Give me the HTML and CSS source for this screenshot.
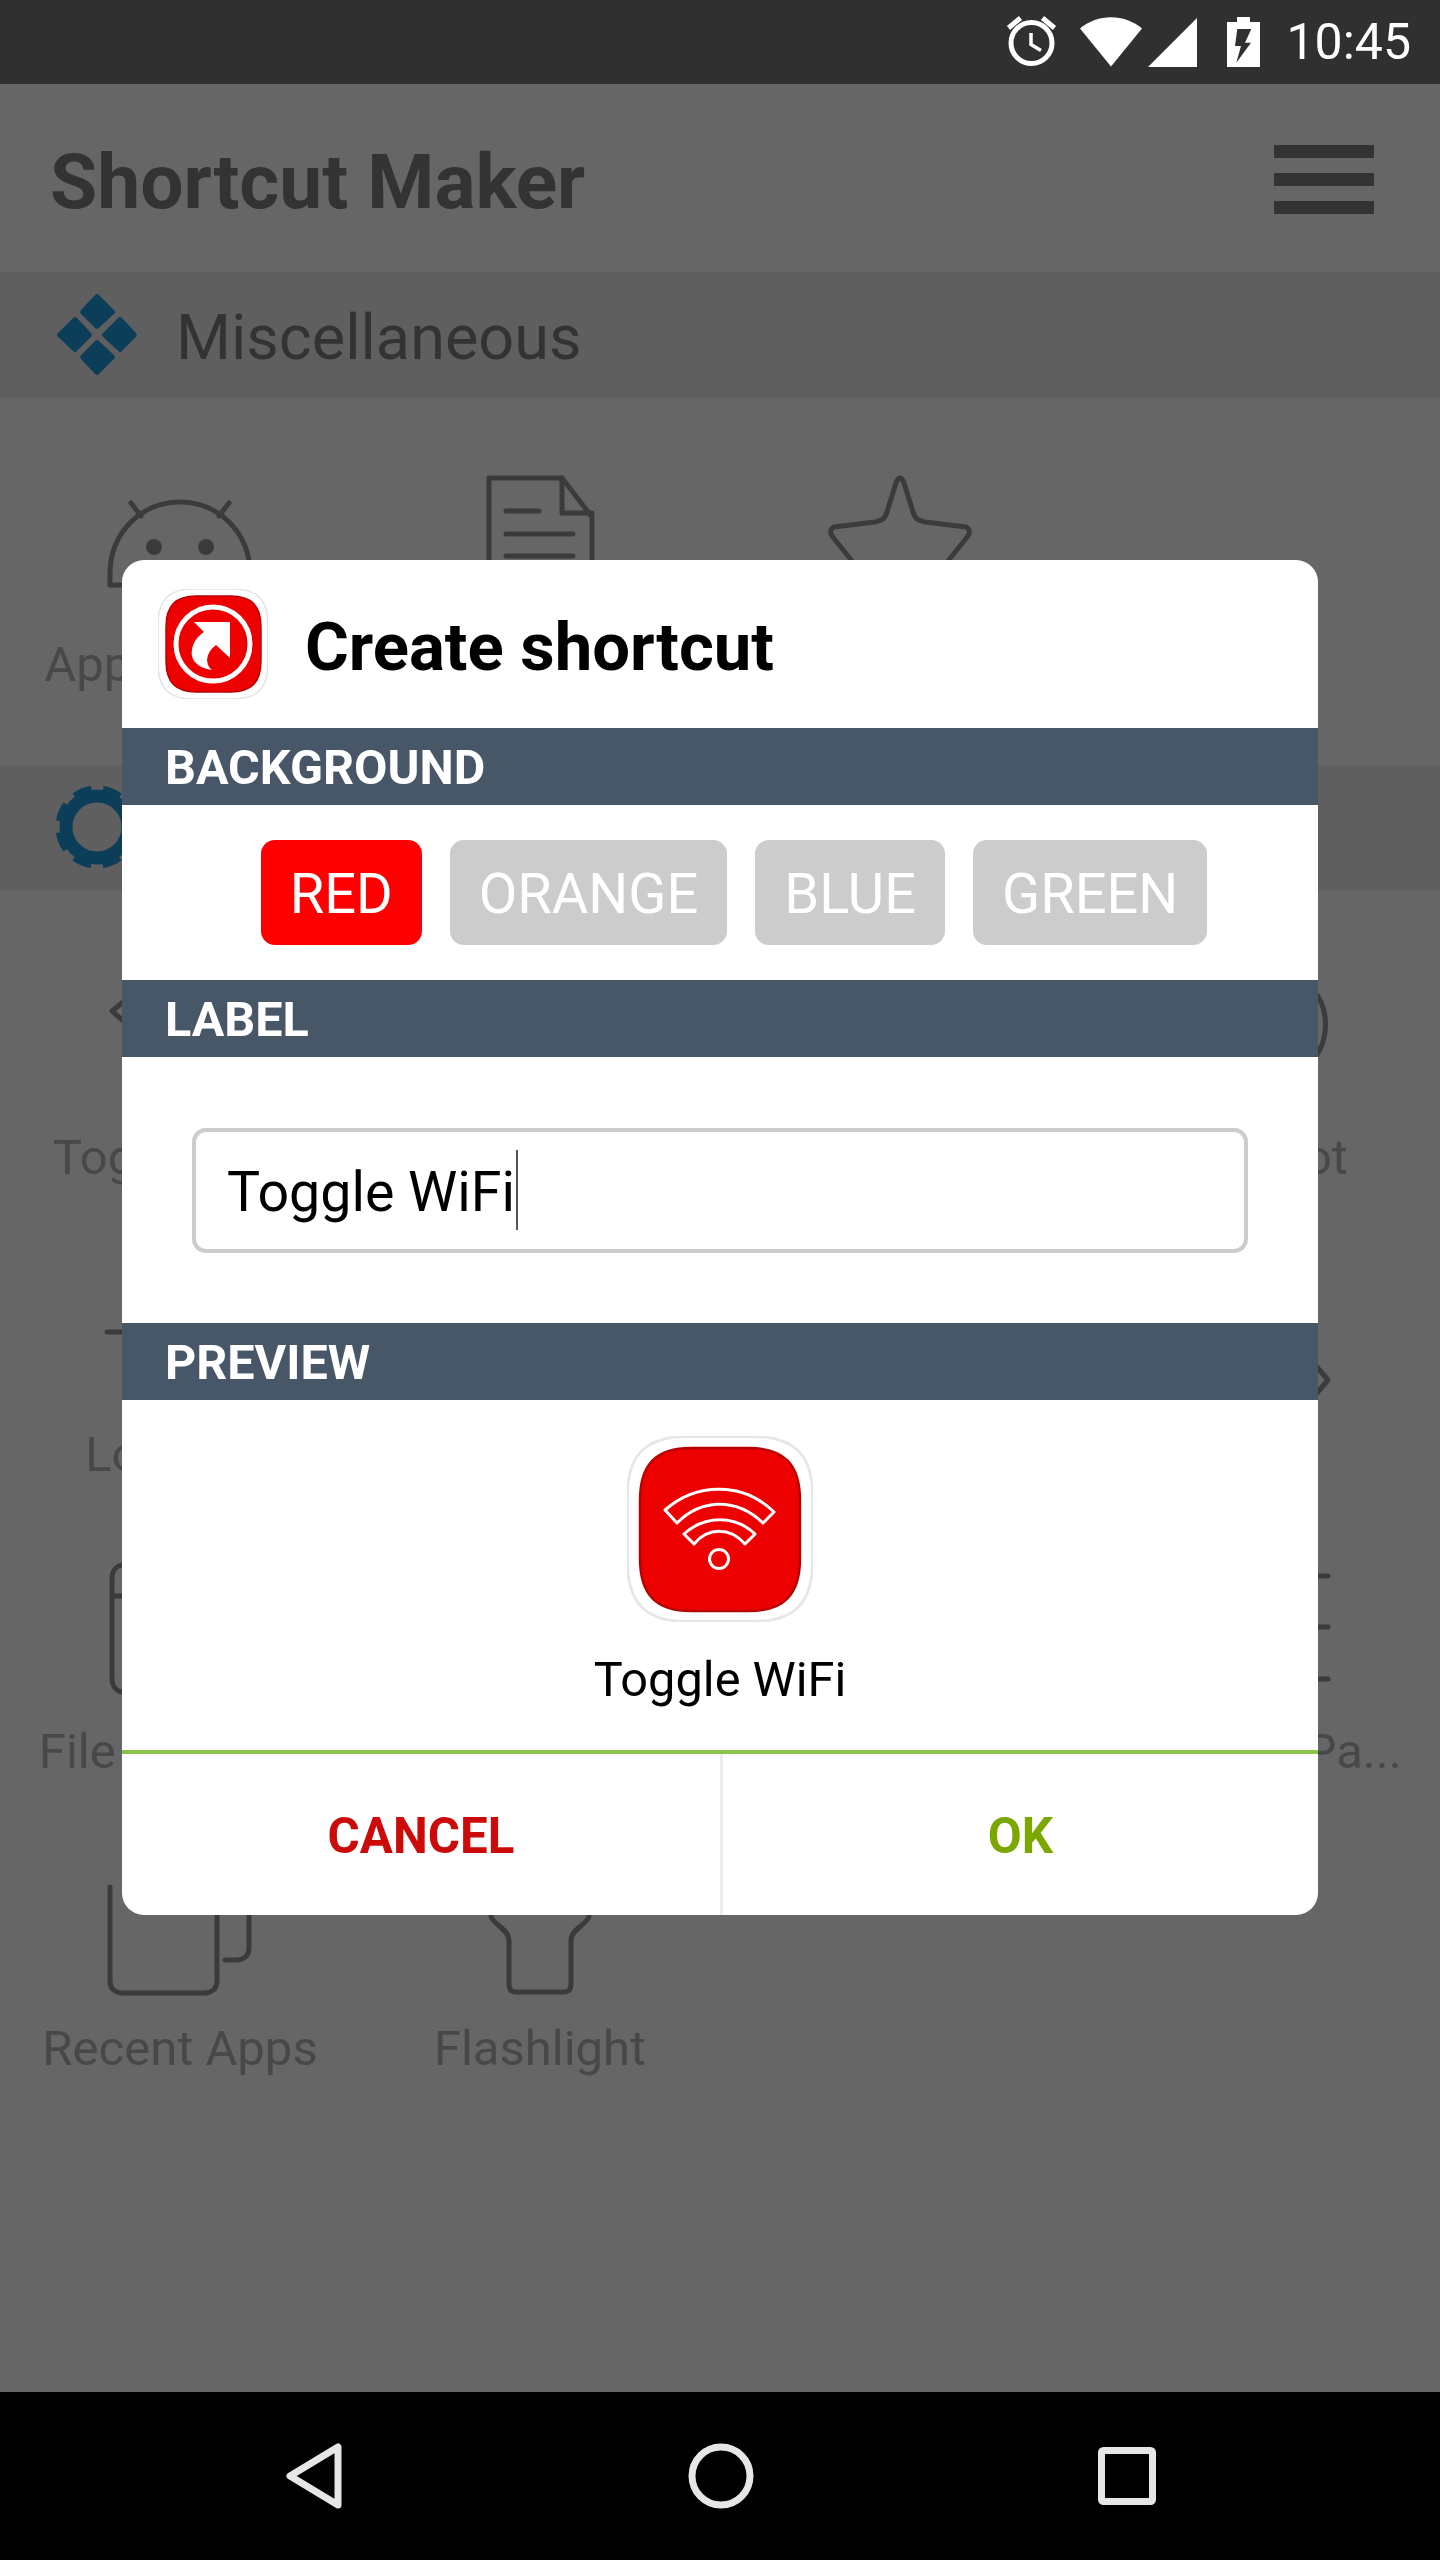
FILE: index.html
```html
<!DOCTYPE html>
<html lang="en">
<head>
<meta charset="utf-8">
<title>Shortcut Maker</title>
<link rel="stylesheet" href="styles.css">
</head>
<body>
<div class="phone">
  <header class="status">
    <svg class="st-alarm" viewBox="0 0 52 52" width="52" height="52"><g fill="none" stroke="#fff"><circle cx="25.500" cy="27" r="20.500" stroke-width="5"/><path d="M2.500 12 14.500 2M36.500 2 48.500 12" stroke-width="5"/><path d="M25 17V28.500L35 34.500" stroke-width="3.500"/></g></svg>
    <svg class="st-wifi" viewBox="0 0 62 50" width="62" height="50"><path d="M31 49.500 0 11.500C18 -3.500 44 -3.500 62 11.500Z" fill="#fff"/></svg>
    <svg class="st-signal" viewBox="0 0 49 49" width="49" height="49"><path d="M0 49H49V0Z" fill="#fff"/></svg>
    <svg class="st-battery" viewBox="0 0 33 50" width="33" height="50"><path d="M10 0H23V5H33V50H0V5H10Z" fill="#fff"/><path d="M10.300 12H24.300L18 25.700H24L9.300 45.700 14 29H8Z" fill="#303030"/></svg>
    <span class="st-time">10:45</span>
  </header>

  <main class="app">
    <div class="appbar">
      <h1 class="app-title">Shortcut Maker</h1>
      <div class="burger"><span></span><span></span><span></span></div>
    </div>

    <div class="section">
      <svg class="sec-icon" viewBox="0 0 84 84" width="84" height="84"><g fill="#1e9be1" stroke="#1e9be1" stroke-width="5.500" stroke-linejoin="round"><path d="M41 4 56 19 41 33 27 19Z"/><path d="M19 27 33 42 19 56 4 42Z"/><path d="M64 27 78 42 64 56 49 42Z"/><path d="M41 50 56 64 41 79 27 64Z"/></g></svg>
      <span class="sec-name">Miscellaneous</span>
    </div>
    <div class="grid grid-top">
      <div class="item">
        <svg class="ico" viewBox="0 0 160 140"><g class="ln"><path d="M31 27 41 40M129 27 119 40"/><path d="M10 109V98C10 56 42 26 80 26S150 56 150 98V109"/><path d="M10 109H30"/></g><circle cx="54" cy="71" r="8" class="dot"/><circle cx="106" cy="71" r="8" class="dot"/></svg>
        <span class="label">Applications</span>
      </div>
      <div class="item">
        <svg class="ico" viewBox="0 0 160 140"><g class="ln"><path d="M29 100V2H102L132 41V100"/><path d="M102 2V37H132"/><path d="M46 35H79M46 58H113M46 80H113"/></g></svg>
      </div>
      <div class="item">
        <svg class="ico" viewBox="0 0 160 140"><g class="ln"><path d="M40 100 36 90 12 60C10 57 10 53 14 51L55 46C62 44 64 44 67 36L75 10C76 6 78 2 80 2C82 2 84 6 85 10L93 36C96 44 98 44 105 46L146 51C150 53 150 57 148 60L124 90 120 100"/></g></svg>
      </div>
      <div class="item"></div>
    </div>

    <div class="section">
      <svg class="sec-icon" viewBox="0 0 84 84" width="84" height="84"><g fill="none" stroke="#1e9be1"><circle cx="41" cy="41" r="31" stroke-width="13"/><circle cx="41" cy="41" r="37.500" stroke-width="8" stroke-dasharray="18 11.450" stroke-dashoffset="-5.700"/></g></svg>
    </div>
    <div class="grid">
      <div class="item">
        <svg class="ico" viewBox="0 0 160 140"><path class="ln" d="M28 29 12 42 28 56"/></svg>
        <span class="label">Toggle WiFi</span>
      </div>
      <div class="item"></div>
      <div class="item"></div>
      <div class="item">
        <svg class="ico" viewBox="0 0 160 140"><path class="ln" d="M132 20C150 38 150 72 132 92"/></svg>
        <span class="label">Hotspot</span>
      </div>
      <div class="item">
        <svg class="ico" viewBox="0 0 160 140"><path class="ln" d="M7 66H30"/></svg>
        <span class="label">Location</span>
      </div>
      <div class="item"></div>
      <div class="item"></div>
      <div class="item">
        <svg class="ico" viewBox="0 0 160 140"><path class="ln" d="M136 100 148 114 136 128"/></svg>
      </div>
      <div class="item">
        <svg class="ico" viewBox="0 0 160 140"><path class="ln" d="M40 2H24C16 2 12 8 12 16V115C12 123 16 129 24 129H40M12 33H40"/></svg>
        <span class="label">File Manager</span>
      </div>
      <div class="item"></div>
      <div class="item"></div>
      <div class="item">
        <svg class="ico" viewBox="0 0 160 140"><path class="ln" d="M120 13H148M120 64H148M120 116H148"/></svg>
        <span class="label label-end">Settings Pa...</span>
      </div>
      <div class="item">
        <svg class="ico" viewBox="0 0 160 140"><g class="ln"><path d="M10 27V121C10 129 15 133 23 133H104C112 133 117 129 117 121V27"/><path d="M149 20V88C149 96 144 100 136 100H125"/></g></svg>
        <span class="label">Recent Apps</span>
      </div>
      <div class="item">
        <svg class="ico" viewBox="0 0 160 140"><path class="ln" d="M31 40V56C31 63 49 69 49 80V124C49 130 52 132 56 132H104C108 132 111 130 111 124V80C111 69 129 63 129 56V40"/></svg>
        <span class="label">Flashlight</span>
      </div>
    </div>

    <div class="scrim"></div>

    <section class="dialog">
      <div class="dlg-head">
        <svg class="dlg-logo" viewBox="0 0 110 110" width="110" height="110">
          <path class="sq-out" transform="scale(1.1)" d="M32 0H68C90 0 100 10 100 32V68C100 90 90 100 68 100H32C10 100 0 90 0 68V32C0 10 10 0 32 0Z"/>
          <path class="sq-red" transform="translate(8 7) scale(.95 .96)" d="M32 0H68C90 0 100 10 100 32V68C100 90 90 100 68 100H32C10 100 0 90 0 68V32C0 10 10 0 32 0Z"/>
          <circle cx="55" cy="55" r="37" fill="none" stroke="#fff" stroke-width="5"/>
          <path d="M36 33H72V69L58 56C50 62 45 73 54 81 40 79 32 71 34 61 35 53 40 47 46 43Z" fill="#fff"/>
        </svg>
        <h2 class="dlg-title">Create shortcut</h2>
      </div>

      <div class="dlg-bar">BACKGROUND</div>
      <div class="swatches">
        <span class="swatch swatch-on">RED</span>
        <span class="swatch">ORANGE</span>
        <span class="swatch">BLUE</span>
        <span class="swatch">GREEN</span>
      </div>

      <div class="dlg-bar">LABEL</div>
      <div class="field-wrap">
        <div class="field"><span>Toggle WiFi</span><i class="caret"></i></div>
      </div>

      <div class="dlg-bar">PREVIEW</div>
      <div class="preview">
        <svg class="pv-icon" viewBox="0 0 186 186" width="186" height="186">
          <path class="sq-out" transform="translate(.5 .5) scale(1.85)" stroke-width="1" d="M32 0H68C90 0 100 10 100 32V68C100 90 90 100 68 100H32C10 100 0 90 0 68V32C0 10 10 0 32 0Z"/>
          <path class="sq-red" transform="translate(13 12) scale(1.6 1.63)" d="M32 0H68C90 0 100 10 100 32V68C100 90 90 100 68 100H32C10 100 0 90 0 68V32C0 10 10 0 32 0Z"/>
          <g fill="none" stroke="#fff" stroke-width="3" stroke-linejoin="round" transform="translate(-27 -16)">
            <path d="M65 90C97 62 143 62 174 92L163 103C137 78 102 78 77 103Z"/>
            <path d="M84 114C105 95 135 95 155 114L145 124C130 107 108 107 94 124Z"/>
            <circle cx="119" cy="139" r="9.500"/>
          </g>
        </svg>
        <span class="pv-label">Toggle WiFi</span>
      </div>

      <div class="dlg-foot">
        <span class="btn btn-cancel">CANCEL</span>
        <span class="btn btn-ok">OK</span>
      </div>
    </section>
  </main>

  <footer class="nav">
    <svg class="nav-back" viewBox="0 0 56 66" width="56" height="66"><path d="M52 4V62L4 33Z" fill="none" stroke="#e6e6e6" stroke-width="7" stroke-linejoin="round"/></svg>
    <svg class="nav-home" viewBox="0 0 66 66" width="66" height="66"><circle cx="33" cy="33" r="29" fill="none" stroke="#e6e6e6" stroke-width="7"/></svg>
    <svg class="nav-rec" viewBox="0 0 58 58" width="58" height="58"><rect x="3.500" y="3.500" width="51" height="51" rx="2" fill="none" stroke="#e6e6e6" stroke-width="7"/></svg>
  </footer>
</div>
</body>
</html>
```

FILE: styles.css
```css
* { box-sizing: border-box; }
html, body { margin: 0; padding: 0; }
body { font-family: Roboto, "Noto Sans", sans-serif; background: #fff; }

.phone { width: 1440px; height: 2560px; display: flex; flex-direction: column; overflow: hidden; }

/* status bar */
.status { height: 84px; flex: none; background: #303030; display: flex; align-items: center; padding-right: 29px; justify-content: flex-end; }
.st-alarm { margin-right: 22px; }
.st-wifi { margin-right: 6px; }
.st-signal { margin-right: 30px; }
.st-battery { margin-right: 26px; }
.st-time { color: #fff; font-size: 50px; line-height: 84px; }

/* app */
.app { flex: 1; position: relative; background: #fff; }
.appbar { height: 188px; display: flex; align-items: center; justify-content: space-between; padding: 0 66px 0 50px; }
.app-title { margin: 8px 0 0; font-size: 76.700px; font-weight: 700; color: #808080; }
.burger { display: flex; flex-direction: column; gap: 15px; width: 100px; margin-top: 3px; }
.burger span { height: 13px; background: #808080; }

.section { height: 126px; background: #eee; display: flex; align-items: center; padding-left: 56px; }
.sec-name { margin: 4px 0 0 36px; font-size: 63px; color: #808080; }

.grid { display: grid; grid-template-columns: repeat(4, 360px); grid-auto-rows: 297px; }
.grid-top { height: 367px; }
.item { display: flex; flex-direction: column; align-items: center; padding-top: 78px; }
.ico { width: 160px; height: 140px; flex: none; overflow: visible; margin-bottom: 19px; }
.ln { fill: none; stroke: #949494; stroke-width: 5; stroke-linecap: round; stroke-linejoin: round; }
.dot { fill: #949494; }
.label { font-size: 49px; line-height: 60px; color: #b4b4b4; white-space: nowrap; }
.label-end { margin-left: -4px; }

.scrim { position: absolute; inset: 0; background: rgba(0, 0, 0, .6); }

/* dialog */
.dialog { position: absolute; left: 122px; top: 476px; width: 1196px; height: 1355px; background: #fff; border-radius: 22px; overflow: hidden; display: flex; flex-direction: column; }
.dlg-head { height: 168px; display: flex; align-items: center; padding-left: 36px; }
.dlg-logo { flex: none; }
.dlg-title { margin: 5px 0 0 37px; font-size: 67px; font-weight: 700; color: #000; }
.sq-out { fill: #fff; stroke: #e6e6e6; stroke-width: 1.500; }
.sq-red { fill: #ec0000; stroke: #b80000; stroke-width: 1.500; }

.dlg-bar { height: 77px; flex: none; background: #485767; color: #fff; font-size: 48.500px; font-weight: 700; line-height: 79px; padding-left: 43px; }

.swatches { height: 175px; display: flex; align-items: center; justify-content: center; gap: 28px; padding: 0 0 0 28px; }
.swatch { height: 105px; display: flex; align-items: center; padding: 2px 29px 0; border-radius: 14px; background: #ccc; color: #fff; font-size: 56px; }
.swatch-on { background: #f00; }

.field-wrap { height: 266px; display: flex; align-items: center; padding: 0 70px; }
.field { width: 100%; height: 125px; border: 4px solid #ccc; border-radius: 14px; padding-left: 31px; display: flex; align-items: center; font-size: 55.500px; color: #000; }
.field span { margin-top: 5px; }
.caret { width: 2px; height: 80px; background: #555; margin-left: 1px; }

.preview { height: 350px; display: flex; flex-direction: column; align-items: center; padding-top: 36px; }
.pv-label { margin-top: 28px; font-size: 48.700px; line-height: 60px; color: #000; }

.dlg-foot { flex: 1; display: grid; grid-template-columns: 1fr 1fr; border-top: 4px solid #8bc34a; }
.btn { display: flex; align-items: center; justify-content: center; padding-top: 2px; font-size: 49.300px; font-weight: 700; }
.btn-cancel { color: #cc0a0a; }
.btn-ok { color: #7aa800; border-left: 3px solid #ececec; }

/* nav */
.nav { height: 168px; flex: none; background: #000; display: flex; align-items: center; }
.nav-back { margin-left: 286px; }
.nav-home { margin-left: 346px; }
.nav-rec { margin-left: 344px; }
```
